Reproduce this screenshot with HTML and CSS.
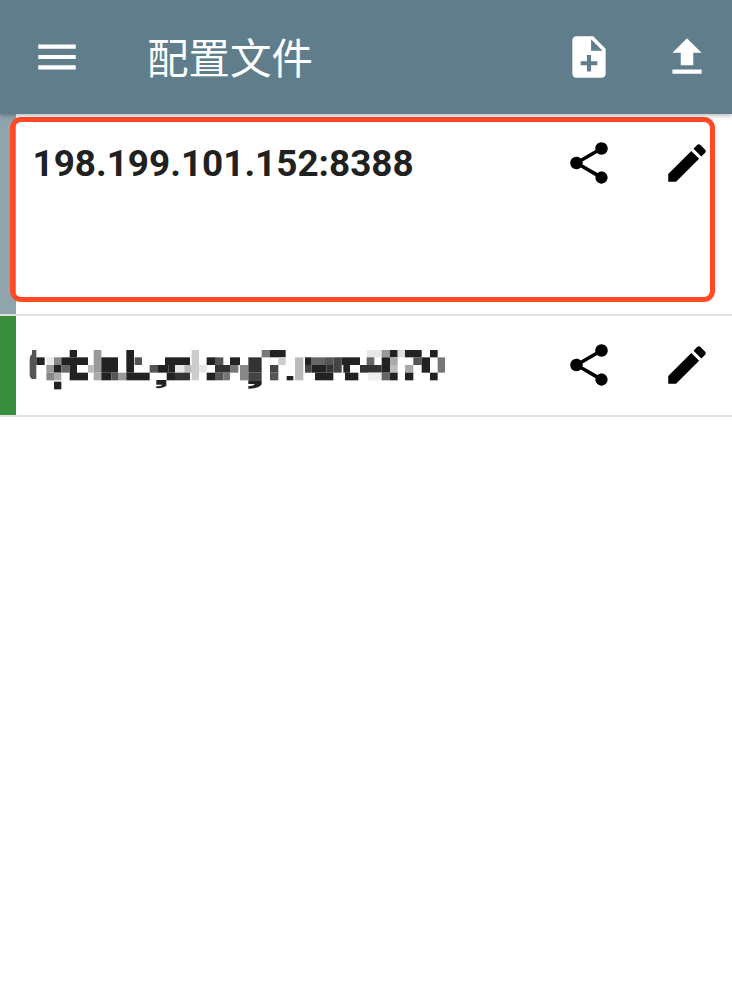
FILE: index.html
```html
<!DOCTYPE html>
<html lang="zh-CN">
<head>
  <meta charset="UTF-8">
  <meta name="viewport" content="width=device-width, initial-scale=1.0">
  <title>配置文件</title>
  <link rel="stylesheet" href="styles.css">
</head>
<body>
  <header class="toolbar">
    <svg class="icon menu" viewBox="0 0 24 24"><path d="M3 18h18v-2H3v2zm0-5h18v-2H3v2zm0-7v2h18V6H3z"/></svg>
    <h1 class="title">配置文件</h1>
    <svg class="icon add" viewBox="0 0 24 24"><path d="M14 2H6c-1.100 0-1.990.9-1.990 2L4 20c0 1.100.89 2 1.990 2H18c1.100 0 2-.9 2-2V8l-6-6zm2 14h-3v3h-2v-3H8v-2h3v-3h2v3h3v2zm-3-7V3.500L18.500 9H13z"/></svg>
    <svg class="icon" viewBox="0 0 24 24"><path d="M9 16h6v-6h4l-7-7-7 7h4zm-4 2h14v2H5z"/></svg>
  </header>

  <div class="profile profile-active">
    <div class="strip"></div>
    <div class="name">198.199.101.152:8388</div>
    <svg class="icon share" viewBox="0 0 24 24"><path d="M18 16.080c-.76 0-1.440.3-1.960.77L8.910 12.700c.05-.23.09-.46.09-.7s-.04-.47-.09-.7l7.050-4.110c.54.5 1.250.81 2.040.81 1.660 0 3-1.340 3-3s-1.340-3-3-3-3 1.340-3 3c0 .24.04.47.09.7L8.040 9.810C7.500 9.310 6.790 9 6 9c-1.660 0-3 1.340-3 3s1.340 3 3 3c.79 0 1.500-.31 2.040-.81l7.120 4.160c-.05.21-.08.43-.08.65 0 1.610 1.310 2.920 2.920 2.920s2.920-1.310 2.920-2.920-1.310-2.920-2.920-2.920z"/></svg>
    <svg class="icon" viewBox="0 0 24 24"><path d="M3 17.250V21h3.750L17.810 9.940l-3.750-3.750L3 17.250zM20.710 7.040c.39-.39.39-1.020 0-1.410l-2.340-2.340c-.39-.39-1.020-.39-1.410 0l-1.830 1.830 3.750 3.750 1.830-1.830z"/></svg>
    <div class="highlight"></div>
  </div>

  <div class="profile profile-ok">
    <div class="strip"></div>
    <!-- censored name, mosaic cells -->
    <svg class="mosaic" viewBox="0 0 1260 126">
      <path fill="#555" d="M5 33q0-10 7-15V6h13v87H12q-7-3-7-15z"/>
      <rect x="25" y="28" width="25" height="23" fill="#222"/>
      <rect x="55" y="28" width="23" height="23" fill="#e8e8e8"/>
      <rect x="78" y="28" width="22" height="23" fill="#888"/>
      <rect x="100" y="28" width="80" height="23" fill="#222"/>
      <rect x="125" y="6" width="22" height="22" fill="#222"/>
      <rect x="197" y="6" width="23" height="68" fill="#999"/>
      <rect x="220" y="28" width="50" height="46" fill="#222"/>
      <rect x="295" y="6" width="23" height="68" fill="#222"/>
      <rect x="320" y="28" width="22" height="23" fill="#555"/>
      <rect x="55" y="51" width="23" height="23" fill="#999"/>
      <rect x="78" y="51" width="22" height="23" fill="#222"/>
      <rect x="100" y="51" width="25" height="23" fill="#666"/>
      <rect x="125" y="51" width="22" height="46" fill="#222"/>
      <rect x="180" y="51" width="17" height="23" fill="#bbb"/>
      <rect x="365" y="51" width="25" height="23" fill="#555"/>
      <rect x="390" y="51" width="31" height="23" fill="#222"/>
      <rect x="55" y="74" width="23" height="23" fill="#888"/>
      <rect x="78" y="74" width="22" height="23" fill="#aaa"/>
      <rect x="147" y="74" width="33" height="23" fill="#222"/>
      <rect x="197" y="74" width="23" height="23" fill="#aaa"/>
      <rect x="220" y="74" width="30" height="23" fill="#222"/>
      <rect x="250" y="74" width="20" height="23" fill="#555"/>
      <rect x="270" y="74" width="25" height="23" fill="#999"/>
      <rect x="295" y="74" width="70" height="23" fill="#222"/>
      <rect x="78" y="101" width="22" height="23" fill="#222"/>
      <path fill="#222" d="M385 96h30v18q-12 8-30 6v-6q12 2 18-4h-18z"/>

      <rect x="411" y="28" width="75" height="23" fill="#222"/>
      <rect x="491" y="6" width="22" height="91" fill="#ccc"/>
      <rect x="536" y="28" width="25" height="23" fill="#222"/>
      <rect x="561" y="28" width="25" height="23" fill="#555"/>
      <rect x="606" y="28" width="30" height="23" fill="#222"/>
      <rect x="661" y="28" width="40" height="23" fill="#333"/>
      <rect x="701" y="6" width="25" height="22" fill="#777"/>
      <rect x="726" y="6" width="47" height="22" fill="#222"/>
      <rect x="751" y="28" width="22" height="23" fill="#ccc"/>
      <rect x="801" y="28" width="25" height="69" fill="#bbb"/>
      <rect x="421" y="51" width="20" height="23" fill="#222"/>
      <rect x="441" y="51" width="28" height="23" fill="#e8e8e8"/>
      <rect x="469" y="51" width="22" height="23" fill="#bbb"/>
      <rect x="513" y="51" width="23" height="23" fill="#e5e5e5"/>
      <rect x="561" y="51" width="45" height="23" fill="#333"/>
      <rect x="606" y="51" width="25" height="23" fill="#777"/>
      <rect x="636" y="51" width="25" height="46" fill="#888"/>
      <rect x="661" y="51" width="40" height="23" fill="#333"/>
      <rect x="726" y="51" width="25" height="23" fill="#444"/>
      <rect x="416" y="74" width="25" height="23" fill="#222"/>
      <rect x="441" y="74" width="45" height="23" fill="#333"/>
      <rect x="536" y="74" width="25" height="23" fill="#222"/>
      <rect x="561" y="74" width="25" height="23" fill="#555"/>
      <rect x="586" y="74" width="20" height="23" fill="#777"/>
      <rect x="661" y="74" width="40" height="23" fill="#444"/>
      <rect x="726" y="74" width="25" height="23" fill="#555"/>
      <rect x="776" y="84" width="20" height="13" fill="#222"/>
      <path fill="#222" d="M661 97h40v12q-10 14-40 13v-8q15 1 20-6h-20z"/>

      <rect x="1016" y="6" width="46" height="22" fill="#e8e8e8"/>
      <rect x="1061" y="6" width="25" height="22" fill="#999"/>
      <rect x="1086" y="6" width="23" height="22" fill="#222"/>
      <rect x="1109" y="6" width="22" height="22" fill="#ddd"/>
      <rect x="1131" y="6" width="50" height="22" fill="#222"/>
      <rect x="1206" y="6" width="23" height="22" fill="#222"/>
      <rect x="831" y="28" width="20" height="23" fill="#222"/>
      <rect x="851" y="28" width="40" height="23" fill="#666"/>
      <rect x="891" y="28" width="25" height="23" fill="#555"/>
      <rect x="916" y="28" width="25" height="23" fill="#444"/>
      <rect x="941" y="28" width="55" height="23" fill="#222"/>
      <rect x="1016" y="28" width="23" height="23" fill="#666"/>
      <rect x="1061" y="28" width="25" height="46" fill="#222"/>
      <rect x="1086" y="28" width="23" height="23" fill="#aaa"/>
      <rect x="1156" y="28" width="25" height="23" fill="#555"/>
      <rect x="1181" y="28" width="25" height="46" fill="#222"/>
      <rect x="1229" y="28" width="22" height="46" fill="#777"/>
      <rect x="831" y="51" width="20" height="23" fill="#444"/>
      <rect x="851" y="51" width="45" height="23" fill="#222"/>
      <rect x="896" y="51" width="20" height="23" fill="#333"/>
      <rect x="916" y="51" width="25" height="23" fill="#444"/>
      <rect x="946" y="51" width="20" height="23" fill="#222"/>
      <rect x="996" y="51" width="65" height="23" fill="#333"/>
      <rect x="1086" y="51" width="23" height="23" fill="#bbb"/>
      <rect x="1131" y="51" width="25" height="23" fill="#aaa"/>
      <rect x="861" y="74" width="55" height="23" fill="#222"/>
      <rect x="951" y="74" width="40" height="23" fill="#222"/>
      <rect x="1021" y="74" width="40" height="23" fill="#eee"/>
      <rect x="1061" y="74" width="25" height="23" fill="#666"/>
      <rect x="1086" y="74" width="23" height="23" fill="#222"/>
      <rect x="1131" y="74" width="25" height="23" fill="#222"/>
      <rect x="1206" y="74" width="23" height="23" fill="#222"/>
    </svg>
    <svg class="icon share" viewBox="0 0 24 24"><path d="M18 16.080c-.76 0-1.440.3-1.960.77L8.910 12.700c.05-.23.09-.46.09-.7s-.04-.47-.09-.7l7.050-4.110c.54.5 1.250.81 2.040.81 1.660 0 3-1.340 3-3s-1.340-3-3-3-3 1.340-3 3c0 .24.04.47.09.7L8.040 9.810C7.500 9.310 6.790 9 6 9c-1.660 0-3 1.340-3 3s1.340 3 3 3c.79 0 1.500-.31 2.040-.81l7.120 4.160c-.05.21-.08.43-.08.65 0 1.610 1.310 2.920 2.920 2.920s2.920-1.310 2.920-2.920-1.310-2.920-2.920-2.920z"/></svg>
    <svg class="icon" viewBox="0 0 24 24"><path d="M3 17.250V21h3.750L17.810 9.940l-3.750-3.750L3 17.250zM20.710 7.040c.39-.39.39-1.020 0-1.410l-2.340-2.340c-.39-.39-1.020-.39-1.410 0l-1.830 1.830 3.750 3.750 1.830-1.830z"/></svg>
  </div>
</body>
</html>
```

FILE: styles.css
```css
body { margin: 0; background-color: #fff; font-family: Roboto, "Noto Sans CJK SC", sans-serif; }

.icon { width: 50px; height: 50px; flex: none; fill: #000; }

.toolbar { position: relative; z-index: 1; display: flex; align-items: center; height: 114px; padding: 0 20px 0 32px; background-color: #607d8b; box-shadow: 0 2px 4px rgba(0, 0, 0, 0.25); }
.toolbar .icon { fill: #fff; }
.title { flex: 1; margin: 0 0 3px 65px; color: #fff; font-family: "Noto Sans CJK SC", sans-serif; font-size: 41.500px; font-weight: 400; line-height: 50px; }
.add { margin-right: 48px; }

.profile { position: relative; display: flex; align-items: flex-start; padding-right: 20px; box-sizing: border-box; border-bottom: 2px solid #e0e0e0; }
.profile-active { height: 202px; }
.profile-ok { height: 101px; }
.profile .icon { margin-top: 24px; }
.share { margin-right: 48px; }

.strip { align-self: stretch; width: 16px; flex: none; }
.profile-active .strip { background-color: #90a4ae; }
.profile-ok .strip { background-color: #388e3c; }

.name { flex: 1; margin: 28px 0 0 16.500px; color: #212121; font-size: 36.900px; font-weight: 700; line-height: 44px; white-space: nowrap; }
.mosaic { display: block; width: 420px; height: 42px; margin: 32px 0 0 12px; flex: none; filter: blur(0.5px); }
.profile-ok .share { margin-left: auto; }

.highlight { position: absolute; top: 3px; left: 10px; width: 705px; height: 185px; box-sizing: border-box; border: 5.500px solid #ff4a25; border-radius: 11px; }
```
